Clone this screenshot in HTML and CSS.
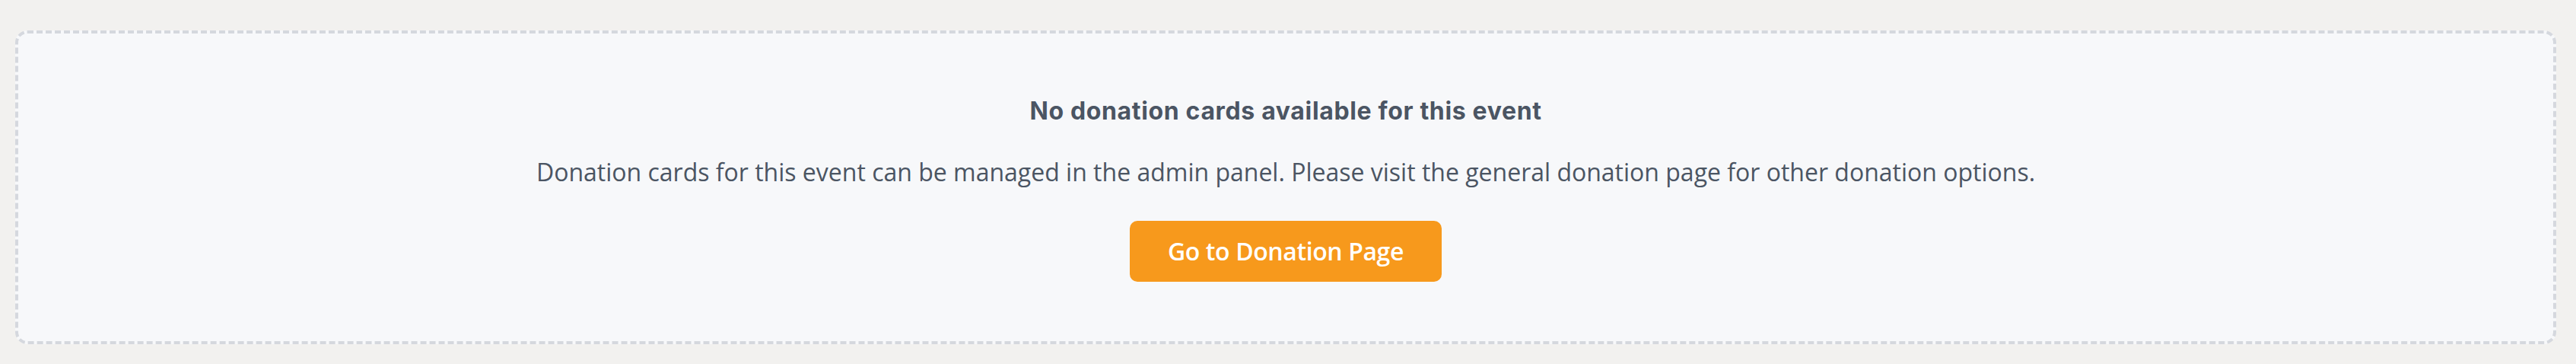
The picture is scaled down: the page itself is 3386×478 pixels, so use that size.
FILE: index.html
```html
<!DOCTYPE html>
<html lang="en">
<head>
<meta charset="utf-8">
<title>Donations</title>
<link rel="stylesheet" href="styles.css">
</head>
<body>
  <main class="page">
    <section class="empty-state">
      <h3 class="empty-title">No donation cards available for this event</h3>
      <p class="empty-text">Donation cards for this event can be managed in the admin panel. Please visit the general donation page for other donation options.</p>
      <a class="btn-donate" href="#">Go to Donation Page</a>
    </section>
  </main>
</body>
</html>
```

FILE: styles.css
```css
html, body {
  margin: 0;
  padding: 0;
}

body {
  background: #f2f1ef;
  font-family: "Open Sans", "Liberation Sans", sans-serif;
}

.page {
  padding: 40px 26px 26px 20px;
}

.empty-state {
  display: flex;
  flex-direction: column;
  align-items: center;
  text-align: center;
  background: #f7f8fa;
  border: 4px dashed #d5d8de;
  border-radius: 16px;
  padding: 78px 40px;
}

.empty-title {
  margin: 0;
  font-family: Inter, "Noto Sans", sans-serif;
  font-weight: 700;
  font-size: 32px;
  line-height: 48px;
  letter-spacing: 0.65px;
  color: #4b5563;
}

.empty-text {
  margin: 32px 0 0;
  font-size: 32px;
  line-height: 48px;
  color: #4b5563;
}

.btn-donate {
  display: inline-block;
  margin-top: 40px;
  padding: 16px 50px;
  background: #f7991c;
  border-radius: 10px;
  color: #ffffff;
  font-size: 32px;
  line-height: 48px;
  font-weight: 600;
  letter-spacing: -0.4px;
  text-decoration: none;
}
```
